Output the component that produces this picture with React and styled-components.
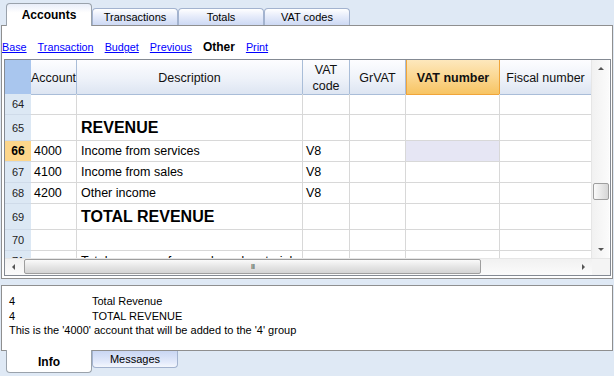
import React from "react";
import styled, { createGlobalStyle, css } from "styled-components";

const GlobalStyle = createGlobalStyle`
  html, body { margin: 0; padding: 0; }
  body {
    background: #dfe9f5;
    font-family: "Liberation Sans", Arial, sans-serif;
    color: #000;
  }
  * { box-sizing: border-box; }
`;

const COLS = "26px 46px 226px 47px 56px 94px 91px";

const Window = styled.div`
  width: 614px;
  height: 376px;
  background: #dfe9f5;
  display: flex;
  flex-direction: column;
  overflow: hidden;
`;

const TabStrip = styled.div`
  display: flex;
  height: 25px;
  padding-left: 6px;
  position: relative;
  z-index: 2;
  align-items: ${(p) => (p.$bottom ? "flex-start" : "flex-end")};
`;

const Tab = styled.div`
  width: 86px;
  display: flex;
  align-items: center;
  justify-content: center;
  font-size: 11px;
  border: 1px solid #a3b3cf;
  ${(p) =>
    p.$bottom
      ? css`
          border-top: none;
          border-radius: 0 0 4px 4px;
          height: 17px;
          background: linear-gradient(#c9d6f3, #e3eafb 70%, #f4f7fd);
        `
      : css`
          border-bottom: none;
          border-radius: 4px 4px 0 0;
          height: 17px;
          background: linear-gradient(#ffffff, #e9eefb 40%, #cdd9f4);
        `}
  ${(p) =>
    p.$active &&
    css`
      height: 23px;
      font-weight: bold;
      font-size: 12px;
      border-color: #9aa2ab;
      background: ${p.$bottom
        ? "#ffffff"
        : "linear-gradient(#e9eef9, #ffffff 40%)"};
      ${p.$bottom ? "margin-top: -1px; padding-top: 2px;" : "margin-bottom: -1px;"}
    `}
`;

const Panel = styled.div`
  margin: 0 1px;
  background: #fff;
  border: 1px solid #8f8f8f;
  display: flex;
  flex-direction: column;
  ${(p) => p.$height && `height: ${p.$height}px;`}
  ${(p) => p.$gap && `margin-top: ${p.$gap}px;`}
`;

const LinkBar = styled.div`
  height: 33px;
  padding: 10px 0 0 0;
  display: flex;
  align-items: center;
  gap: 11px;
  font-size: 10.8px;
`;

const Link = styled.a`
  color: #0000ff;
  text-decoration: underline;
  cursor: pointer;
`;

const Current = styled.span`
  font-weight: bold;
  font-size: 12px;
`;

const GridFrame = styled.div`
  margin: 0 1px 0 2px;
  border: 1px solid #848a93;
  display: flex;
  flex-direction: column;
`;

const GridBody = styled.div`
  display: flex;
  height: 198px;
`;

const Table = styled.div`
  width: 586px;
  overflow: hidden;
`;

const Row = styled.div`
  display: grid;
  grid-template-columns: ${COLS};
  height: ${(p) => p.$h}px;
`;

const HeadCell = styled.div`
  display: flex;
  align-items: center;
  justify-content: center;
  text-align: center;
  padding-top: 2px;
  font-size: 12.5px;
  line-height: 16px;
  color: #111;
  border-right: 1px solid #a9bdd8;
  border-bottom: 1px solid #a9bdd8;
  background: linear-gradient(#fdfdff, #eef2f9 55%, #dde5f2);
  ${(p) =>
    p.$corner &&
    css`
      background: #a9c6ee;
      border-right-color: #a9c6ee;
    `}
  ${(p) =>
    p.$selected &&
    css`
      font-weight: bold;
      background: linear-gradient(#fde8bd, #fbd791 50%, #f7c463);
      border: 1px solid #f0a53a;
      border-top: none;
    `}
  ${(p) => p.$last && "border-right: none;"}
`;

const NumCell = styled.div`
  display: flex;
  align-items: center;
  justify-content: center;
  padding-top: 1px;
  font-size: 11px;
  color: #222;
  background: #dce8f4;
  border-bottom: 1px solid #cfdbe9;
  ${(p) =>
    p.$active &&
    css`
      background: #fdd68b;
      font-weight: bold;
      font-size: 12px;
      color: #000;
    `}
`;

const Cell = styled.div`
  display: flex;
  align-items: center;
  padding-left: ${(p) => p.$pad || 3}px;
  padding-top: 1px;
  font-size: 12.5px;
  white-space: nowrap;
  overflow: hidden;
  border-right: 1px solid #d8d8d8;
  border-bottom: 1px solid #d8d8d8;
  ${(p) =>
    p.$title &&
    css`
      font-size: 16px;
      font-weight: bold;
      padding-top: 2px;
    `}
  ${(p) => p.$focus && "background: #e6e6f4;"}
  ${(p) => p.$last && "border-right: none;"}
`;

const VScroll = styled.div`
  width: 18px;
  display: flex;
  flex-direction: column;
  background: linear-gradient(90deg, #f1f1f1, #fbfbfb);
  border-left: 1px solid #e6e6e6;
`;

const Arrow = styled.div`
  height: 17px;
  width: 17px;
  display: flex;
  align-items: center;
  justify-content: center;
  flex-shrink: 0;
`;

const Triangle = styled.div`
  width: 0;
  height: 0;
  ${(p) =>
    p.$dir === "up" &&
    "border-left: 3px solid transparent; border-right: 3px solid transparent; border-bottom: 3px solid #555;"}
  ${(p) =>
    p.$dir === "down" &&
    "border-left: 3px solid transparent; border-right: 3px solid transparent; border-top: 3px solid #555;"}
  ${(p) =>
    p.$dir === "left" &&
    "border-top: 3px solid transparent; border-bottom: 3px solid transparent; border-right: 3px solid #555;"}
  ${(p) =>
    p.$dir === "right" &&
    "border-top: 3px solid transparent; border-bottom: 3px solid transparent; border-left: 3px solid #555;"}
`;

const Track = styled.div`
  flex: 1;
  display: flex;
  flex-direction: ${(p) => (p.$horizontal ? "row" : "column")};
  align-items: center;
`;

const Thumb = styled.div`
  border: 1px solid #9e9e9e;
  border-radius: 2px;
  display: flex;
  align-items: center;
  justify-content: center;
  font-size: 8px;
  letter-spacing: -1px;
  color: #666;
  ${(p) =>
    p.$horizontal
      ? css`
          height: 15px;
          background: linear-gradient(#fafafa, #e6e6e6 50%, #d4d4d4);
        `
      : css`
          width: 16px;
          background: linear-gradient(90deg, #fafafa, #e4e4e4 60%, #d6d6d6);
        `}
`;

const HScroll = styled.div`
  height: 17px;
  display: flex;
  background: linear-gradient(#f1f1f1, #fbfbfb);
  border-top: 1px solid #e6e6e6;
`;

const Corner = styled.div`
  width: 18px;
  background: #f4f4f4;
`;

const InfoText = styled.div`
  padding: 8px 0 0 7px;
  height: 64px;
  font-size: 11px;
  line-height: 14.5px;
`;

const InfoLine = styled.div`
  display: grid;
  grid-template-columns: 83px 1fr;
  white-space: nowrap;
`;

const rows = [
  { n: 64, h: 21 },
  { n: 65, h: 26, desc: "REVENUE", title: true },
  { n: 66, h: 21, acc: "4000", desc: "Income from services", vat: "V8", active: true },
  { n: 67, h: 21, acc: "4100", desc: "Income from sales", vat: "V8" },
  { n: 68, h: 21, acc: "4200", desc: "Other income", vat: "V8" },
  { n: 69, h: 26, desc: "TOTAL REVENUE", title: true },
  { n: 70, h: 21 },
  { n: 71, h: 21, desc: "Total expenses for goods and materials purchased" },
];

export default function App() {
  return (
    <Window>
      <GlobalStyle />
      <TabStrip>
        <Tab $active>Accounts</Tab>
        <Tab>Transactions</Tab>
        <Tab>Totals</Tab>
        <Tab>VAT codes</Tab>
      </TabStrip>

      <Panel $height={255}>
        <LinkBar>
          <Link>Base</Link>
          <Link>Transaction</Link>
          <Link>Budget</Link>
          <Link>Previous</Link>
          <Current>Other</Current>
          <Link>Print</Link>
        </LinkBar>

        <GridFrame>
          <GridBody>
            <Table>
              <Row $h={34}>
                <HeadCell $corner />
                <HeadCell>Account</HeadCell>
                <HeadCell>Description</HeadCell>
                <HeadCell>
                  VAT
                  <br />
                  code
                </HeadCell>
                <HeadCell>GrVAT</HeadCell>
                <HeadCell $selected>VAT number</HeadCell>
                <HeadCell $last>Fiscal number</HeadCell>
              </Row>
              {rows.map((r) => (
                <Row key={r.n} $h={r.h}>
                  <NumCell $active={r.active}>{r.n}</NumCell>
                  <Cell>{r.acc}</Cell>
                  <Cell $pad={4} $title={r.title}>
                    {r.desc}
                  </Cell>
                  <Cell>{r.vat}</Cell>
                  <Cell />
                  <Cell $focus={r.active} />
                  <Cell $last />
                </Row>
              ))}
            </Table>
            <VScroll>
              <Arrow>
                <Triangle $dir="up" />
              </Arrow>
              <Track>
                <Thumb style={{ height: 17, marginTop: 106 }} />
              </Track>
              <Arrow>
                <Triangle $dir="down" />
              </Arrow>
            </VScroll>
          </GridBody>
          <HScroll>
            <Arrow>
              <Triangle $dir="left" />
            </Arrow>
            <Track $horizontal>
              <Thumb $horizontal style={{ width: 457, marginLeft: 2 }}>
                III
              </Thumb>
            </Track>
            <Arrow>
              <Triangle $dir="right" />
            </Arrow>
            <Corner />
          </HScroll>
        </GridFrame>
      </Panel>

      <Panel $gap={6}>
        <InfoText>
          <InfoLine>
            <span>4</span>
            <span>Total Revenue</span>
          </InfoLine>
          <InfoLine>
            <span>4</span>
            <span>TOTAL REVENUE</span>
          </InfoLine>
          <div>This is the '4000' account that will be added to the '4' group</div>
        </InfoText>
      </Panel>

      <TabStrip $bottom>
        <Tab $bottom $active>
          Info
        </Tab>
        <Tab $bottom>Messages</Tab>
      </TabStrip>
    </Window>
  );
}
